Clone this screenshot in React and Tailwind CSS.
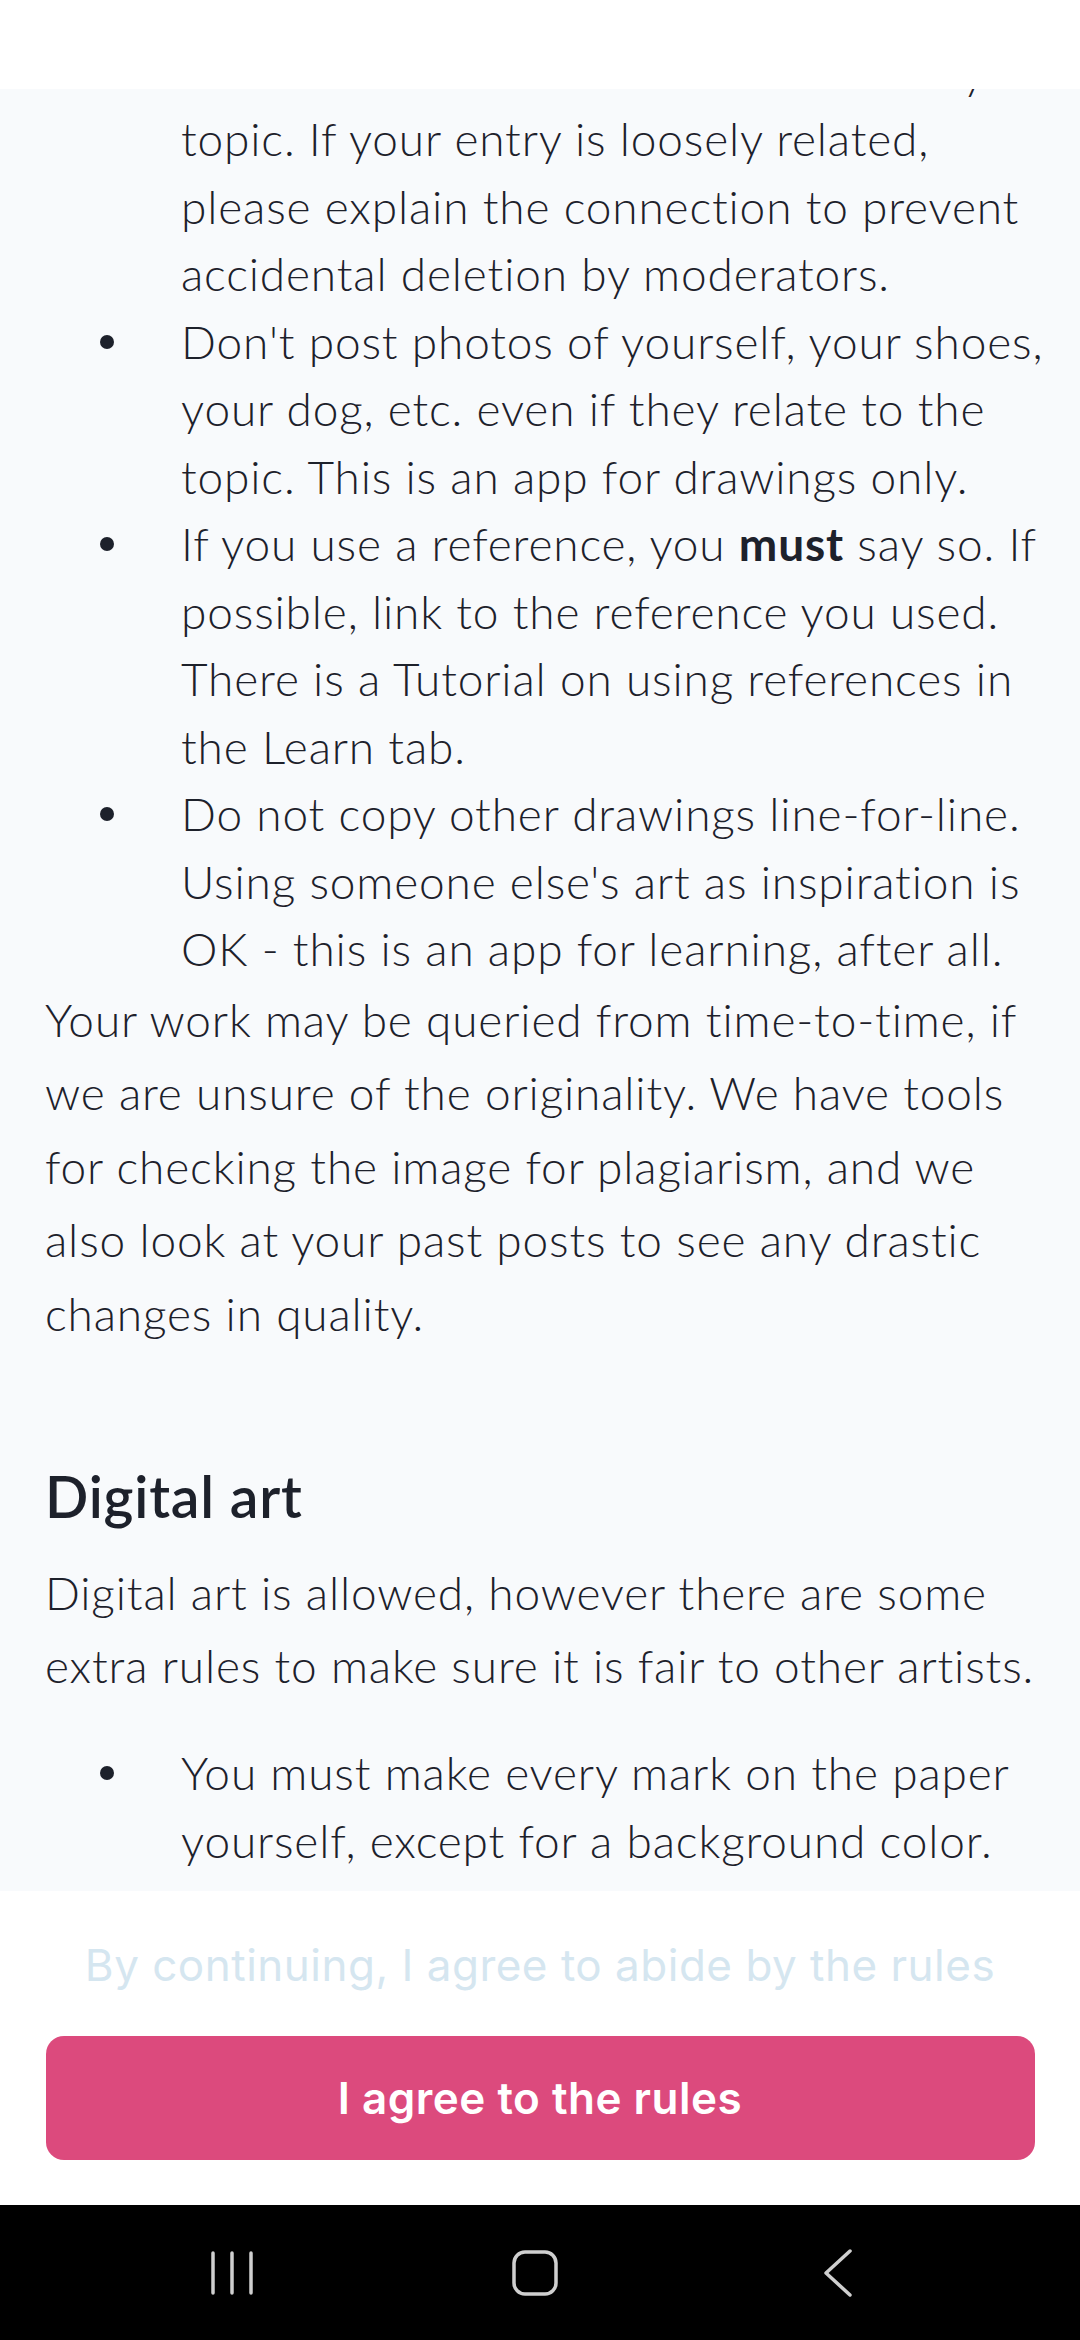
import React from "react";

const TEXT = "text-[#1d212b]";

function Bullet({ lines }) {
  return (
    <li className="flex">
      <span className="w-[181px] shrink-0 flex justify-end pr-[67px] pt-[27px]">
        <span className="block w-[14px] h-[14px] rounded-full bg-[#1d212b]" />
      </span>
      <span className="block">
        {lines.map((l, i) => (
          <span key={i} className="block whitespace-nowrap">
            {l}
          </span>
        ))}
      </span>
    </li>
  );
}

function Para({ lines, className = "" }) {
  return (
    <p className={"pl-[45px] text-[46px] leading-[73.5px] tracking-[0.85px] " + className}>
      {lines.map((l, i) => (
        <span key={i} className="block whitespace-nowrap">
          {l}
        </span>
      ))}
    </p>
  );
}

export default function App() {
  return (
    <div
      className={"w-[1080px] h-[2340px] flex flex-col overflow-hidden bg-white font-light " + TEXT}
      style={{ fontFamily: "Lato, 'Noto Sans', sans-serif" }}
    >
      <div className="h-[89px] shrink-0 bg-white" />

      <div className="h-[1802px] shrink-0 bg-[#f8fafc] overflow-hidden">
        <div className="-mt-[51.5px]">
          <ul className="text-[46px] leading-[67.5px] tracking-[0.85px]">
            <Bullet
              lines={[
                "Entries should be related to the weekly",
                "topic. If your entry is loosely related,",
                "please explain the connection to prevent",
                "accidental deletion by moderators.",
              ]}
            />
            <Bullet
              lines={[
                "Don't post photos of yourself, your shoes,",
                "your dog, etc. even if they relate to the",
                "topic. This is an app for drawings only.",
              ]}
            />
            <Bullet
              lines={[
                <>
                  If you use a reference, you <b className="font-bold">must</b> say so. If
                </>,
                "possible, link to the reference you used.",
                "There is a Tutorial on using references in",
                "the Learn tab.",
              ]}
            />
            <Bullet
              lines={[
                "Do not copy other drawings line-for-line.",
                "Using someone else's art as inspiration is",
                "OK - this is an app for learning, after all.",
              ]}
            />
          </ul>

          <Para
            lines={[
              "Your work may be queried from time-to-time, if",
              "we are unsure of the originality. We have tools",
              "for checking the image for plagiarism, and we",
              "also look at your past posts to see any drastic",
              "changes in quality.",
            ]}
          />

          <h2 className="mt-[112.5px] pl-[45px] text-[57px] leading-[67px] font-semibold tracking-[0.8px]">
            Digital art
          </h2>

          <Para
            className="mt-[26px]"
            lines={[
              "Digital art is allowed, however there are some",
              "extra rules to make sure it is fair to other artists.",
            ]}
          />

          <ul className="mt-[36.5px] text-[46px] leading-[67.5px] tracking-[0.85px]">
            <Bullet
              lines={[
                "You must make every mark on the paper",
                "yourself, except for a background color.",
              ]}
            />
          </ul>
        </div>
      </div>

      <div
        className="h-[314px] shrink-0 bg-white flex flex-col items-center pt-[44px] font-normal"
        style={{ fontFamily: "Inter, Roboto, 'Noto Sans', sans-serif" }}
      >
        <p className="h-[60px] leading-[60px] text-[44px] tracking-[0.5px] text-[#d5e6f0] whitespace-nowrap">
          By continuing, I agree to abide by the rules
        </p>
        <button className="mt-[41px] w-[989px] h-[124px] rounded-[18px] bg-[#dc4a7d] text-white text-[44px] font-semibold tracking-[0.5px] flex items-center justify-center">
          I agree to the rules
        </button>
      </div>

      <div className="h-[135px] shrink-0 bg-black flex items-center justify-center pr-[10px]">
        <div className="w-[303px] flex justify-center">
          <svg width="44" height="46" viewBox="0 0 44 46" fill="none" stroke="#cfcfcf" strokeWidth="3.5" strokeLinecap="round">
            <line x1="3" y1="3" x2="3" y2="43" />
            <line x1="22" y1="3" x2="22" y2="43" />
            <line x1="41" y1="3" x2="41" y2="43" />
          </svg>
        </div>
        <div className="w-[303px] flex justify-center">
          <svg width="46" height="46" viewBox="0 0 46 46" fill="none" stroke="#cfcfcf" strokeWidth="3.5">
            <rect x="2" y="2" width="42" height="42" rx="11" />
          </svg>
        </div>
        <div className="w-[303px] flex justify-center">
          <svg width="30" height="48" viewBox="0 0 30 48" fill="none" stroke="#cfcfcf" strokeWidth="3.5" strokeLinecap="round" strokeLinejoin="round">
            <polyline points="27,2 3,24 27,46" />
          </svg>
        </div>
      </div>
    </div>
  );
}
